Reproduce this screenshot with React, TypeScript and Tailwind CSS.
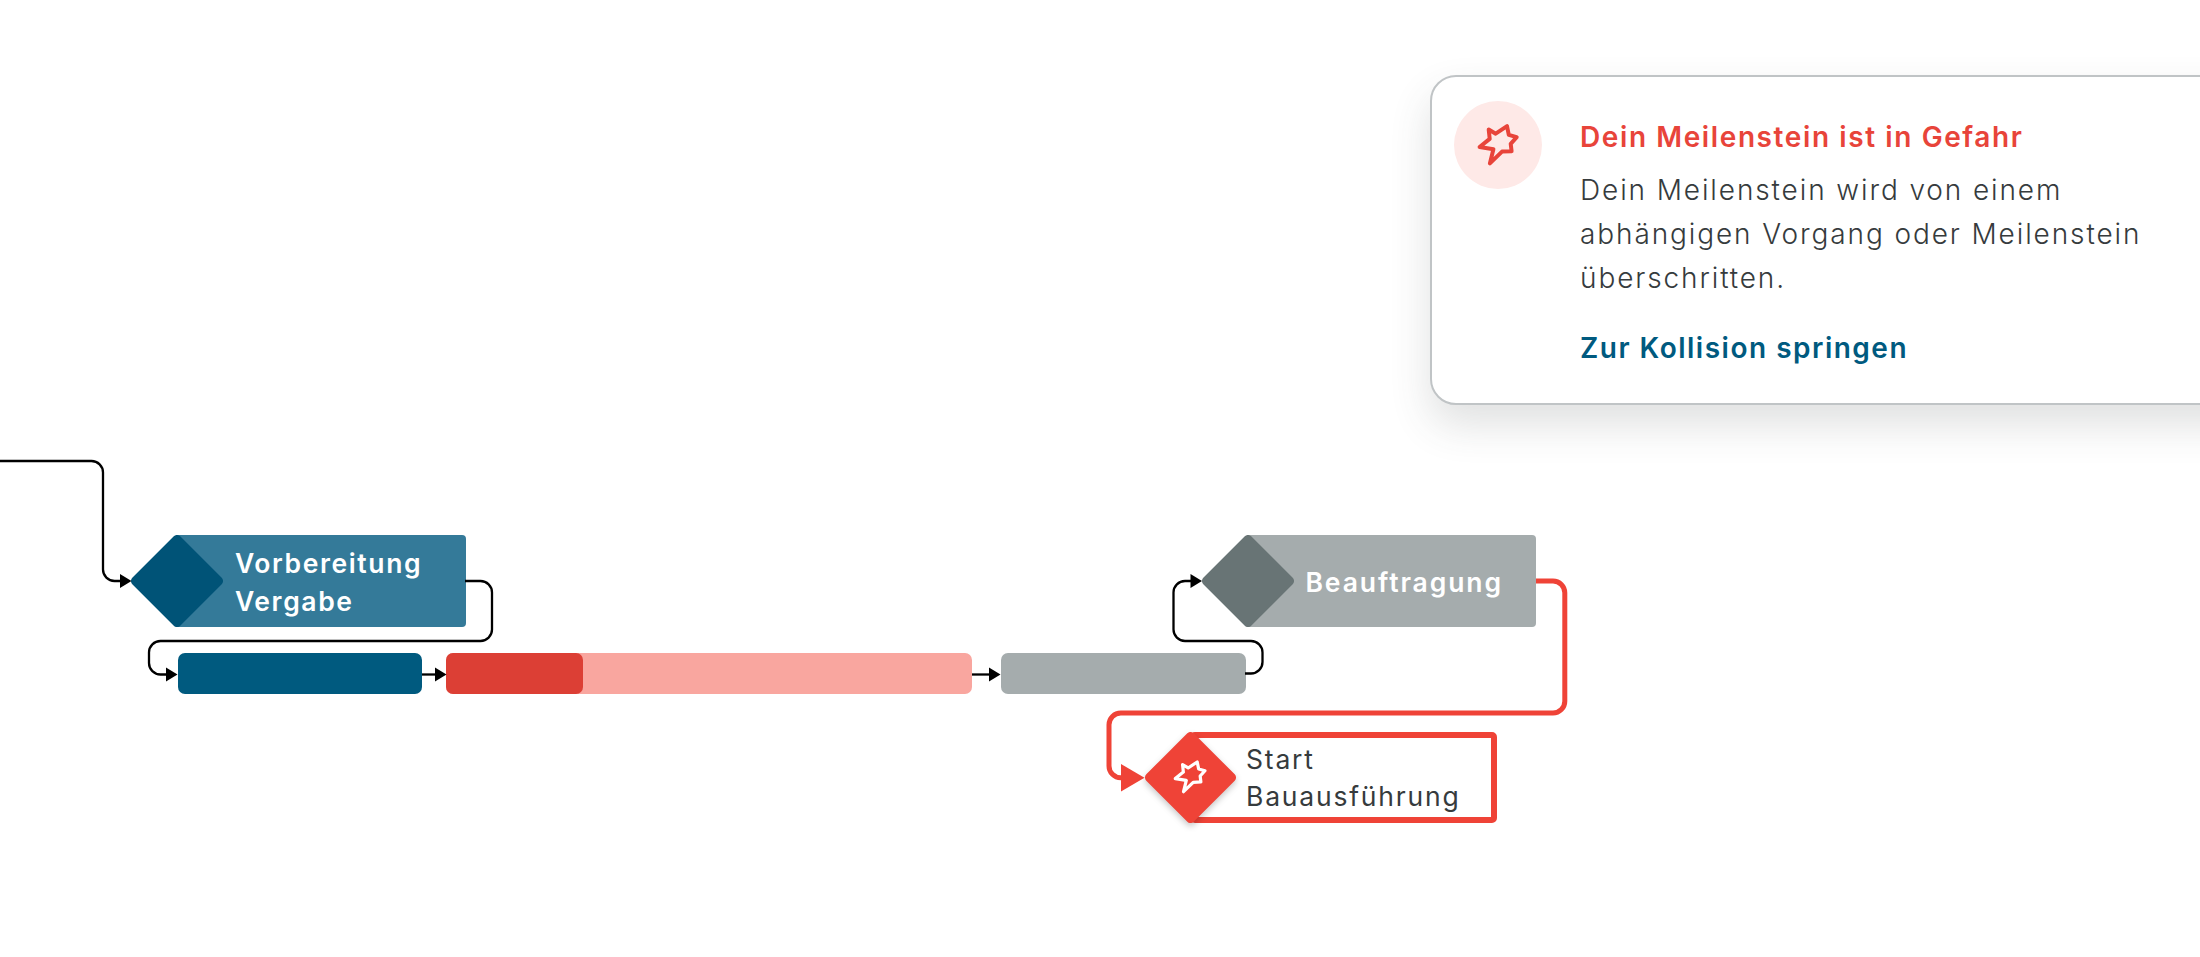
import React from "react";

type Tone = "done" | "planned";

interface Milestone {
  label: string;
  tone: Tone;
  position: string;
  spacing: string;
}

const MILESTONES: Milestone[] = [
  { label: "Vorbereitung Vergabe", tone: "done", position: "left-[131px] top-[535px]", spacing: "tracking-[1.6px]" },
  { label: "Beauftragung", tone: "planned", position: "left-[1201.5px] top-[535px]", spacing: "tracking-[1.9px]" },
];

const TONES: Record<Tone, { bar: string; diamond: string }> = {
  done: { bar: "bg-[#347a99]", diamond: "text-[#005377]" },
  planned: { bar: "bg-[#a5acad]", diamond: "text-[#687475]" },
};

const BLACK_LINKS = [
  "M0 461H91.5a11.5 11.5 0 0 1 11.5 11.5V569.5a11.5 11.5 0 0 0 11.5 11.5H122",
  "M465 581H480.5a11.5 11.5 0 0 1 11.5 11.5V629.5a11.5 11.5 0 0 1 -11.5 11.5H160.5a11.5 11.5 0 0 0 -11.5 11.5V663a11.5 11.5 0 0 0 11.5 11.5H168",
  "M422 674.5H437",
  "M972 674.5H991",
  "M1245 673.5H1251a11.5 11.5 0 0 0 11.5 -11.5V652.5a11.5 11.5 0 0 0 -11.5 -11.5H1185a11.5 11.5 0 0 1 -11.5 -11.5V592.5a11.5 11.5 0 0 1 11.5 -11.5H1192",
];

const BLACK_ARROWS = [
  { x: 131.5, y: 581 },
  { x: 177.5, y: 674.5 },
  { x: 446.5, y: 674.5 },
  { x: 1000.5, y: 674.5 },
  { x: 1202, y: 581 },
];

function CollisionIcon({ className }: { className: string }) {
  return (
    <svg
      viewBox="-1 0 50 50"
      className={className}
      fill="none"
      stroke="currentColor"
      strokeLinecap="round"
      strokeLinejoin="round"
    >
      <path d="M14.7 9.5L21.7 13.7L33 6.2L34.8 14.9L42.7 17.2L36.7 23.8L37.6 31.2L28 31.6L15.9 43.4L19.4 29.3L5.6 27L15.7 18.9Z" />
    </svg>
  );
}

function Diamond({ className }: { className: string }) {
  return (
    <svg viewBox="0 0 92 92" className={className} fill="currentColor">
      <path d="M42.8 1.3a4.5 4.5 0 0 1 6.4 0L90.7 42.8a4.5 4.5 0 0 1 0 6.4L49.2 90.7a4.5 4.5 0 0 1 -6.4 0L1.3 49.2a4.5 4.5 0 0 1 0 -6.4z" />
    </svg>
  );
}

function Links() {
  return (
    <svg viewBox="0 0 2200 957" className="absolute inset-0 h-[957px] w-[2200px]" fill="none">
      {BLACK_LINKS.map((d) => (
        <path key={d} d={d} stroke="#000" strokeWidth={2.3} />
      ))}
      {BLACK_ARROWS.map(({ x, y }) => (
        <path key={x} d={`M${x} ${y}l-11.5 -7v14z`} fill="#000" />
      ))}
      <path
        d="M1536 581H1553a11.8 11.8 0 0 1 11.8 11.8V701.2a11.8 11.8 0 0 1 -11.8 11.8H1120.8a11.8 11.8 0 0 0 -11.8 11.8V766a11.8 11.8 0 0 0 11.8 11.8H1124"
        stroke="#ef4337"
        strokeWidth={5}
      />
      <path d="M1144.5 777.8l-23.5 -13.7v27.4z" fill="#ef4337" />
    </svg>
  );
}

function MilestoneNode({ label, tone, position, spacing }: Milestone) {
  const colors = TONES[tone];
  return (
    <div className={`absolute flex h-[92px] w-[334.5px] ${position}`}>
      <div className={`ml-[46px] flex flex-1 items-center rounded-r-[4px] pt-px pl-[58px] ${colors.bar}`}>
        <span className={`w-[215px] text-[26.5px] leading-[38px] font-semibold text-white ${spacing}`}>{label}</span>
      </div>
      <Diamond className={`absolute top-0 left-0 size-[92px] ${colors.diamond}`} />
    </div>
  );
}

function EndangeredMilestone() {
  return (
    <div className="absolute top-[732px] left-[1145px] flex h-[91px] w-[352px]">
      <div className="ml-[45px] flex flex-1 items-center rounded-[5px] border-[6px] border-[#ef4337] bg-white pt-px pl-[50px]">
        <span className="w-[235px] text-[26.5px] leading-[37px] font-[430] tracking-[1.8px] text-[#363b3d]">
          Start Bauausführung
        </span>
      </div>
      <Diamond className="absolute top-0 left-0 size-[91px] text-[#ef4337] drop-shadow-[0_3px_3px_rgba(0,0,0,0.22)]" />
      <CollisionIcon className="absolute top-[25px] left-[25px] size-10 stroke-[4] text-white" />
    </div>
  );
}

function TaskBars() {
  return (
    <div className="absolute top-[653px] left-[177.5px] flex h-[41px]">
      <div className="w-[244.5px] rounded-[7px] bg-[#005a7f]" />
      <div className="ml-6 w-[526px] rounded-[7px] bg-[#f9a69f]">
        <div className="h-full w-[137px] rounded-[7px] bg-[#dc3f35]" />
      </div>
      <div className="ml-[28.5px] w-[245px] rounded-[7px] bg-[#a5acad]" />
    </div>
  );
}

function CollisionCard() {
  return (
    <div className="absolute top-[75px] left-[1430px] flex h-[330px] w-[840px] rounded-[26px] border-2 border-[#c0c4c6] bg-white pt-6 pl-[22px] shadow-[0_20px_40px_rgba(60,70,70,0.16)]">
      <div className="flex size-[88px] items-center justify-center rounded-full bg-[#fee9e7] text-[#e8443a]">
        <CollisionIcon className="size-[50px] stroke-[4]" />
      </div>
      <div className="ml-[38px] pt-3.5">
        <h3 className="text-[28px] leading-[44px] font-semibold tracking-[1.6px] text-[#e8443a]">
          Dein Meilenstein ist in Gefahr
        </h3>
        <p className="mt-[9px] w-[600px] text-[28px] leading-[44px] font-light tracking-[1.89px] text-[#363b3d]">
          Dein Meilenstein wird von einem
          <br />
          abhängigen Vorgang oder Meilenstein
          <br />
          überschritten.
        </p>
        <a className="mt-[26px] block text-[28px] leading-[44px] font-semibold tracking-[1.5px] text-[#005a7f]">
          Zur Kollision springen
        </a>
      </div>
    </div>
  );
}

export default function App() {
  return (
    <main className="relative h-[957px] w-[2200px] overflow-hidden bg-white font-['Inter',sans-serif]">
      <TaskBars />
      {MILESTONES.map((milestone) => (
        <MilestoneNode key={milestone.label} {...milestone} />
      ))}
      <Links />
      <EndangeredMilestone />
      <CollisionCard />
    </main>
  );
}
